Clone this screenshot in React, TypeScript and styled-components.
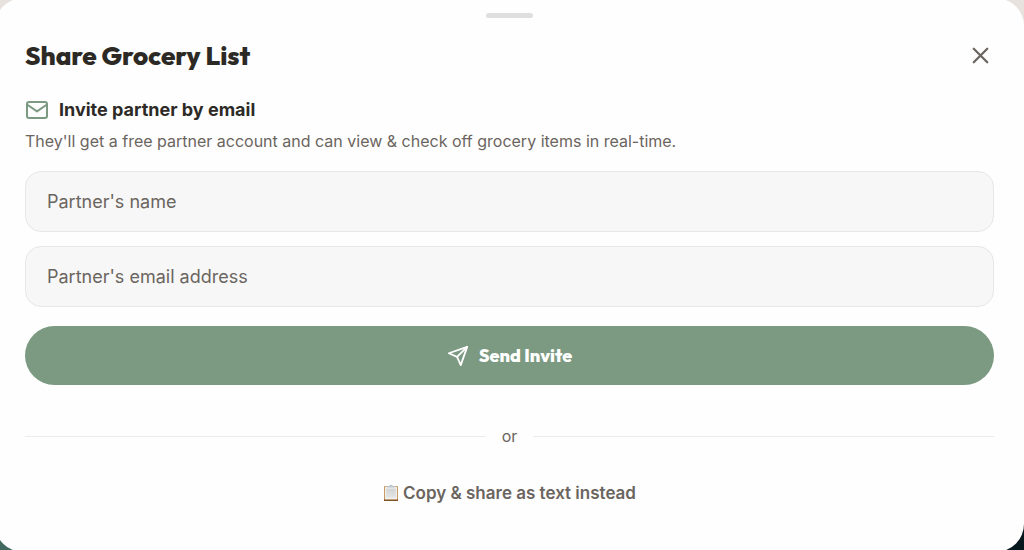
import React, { useState } from "react";
import styled, { createGlobalStyle } from "styled-components";

const GlobalStyle = createGlobalStyle`
  * { box-sizing: border-box; }
  body {
    margin: 0;
    font-family: Inter, "Liberation Sans", sans-serif;
    color: #2d2a26;
  }
`;

const displayFont = `Outfit, Lato, "Liberation Sans", sans-serif`;

const Backdrop = styled.div`
  min-height: 100vh;
  overflow: hidden;
  background: linear-gradient(to bottom, #e8e2de 50%, transparent 50%),
    linear-gradient(to right, #41695f 50%, #07171e 50%);
`;

const Sheet = styled.main`
  margin: -2px 0 -2px -5px;
  min-height: calc(100vh + 4px);
  padding: 15px 30px 32px;
  border-radius: 28px;
  background: #fefefe;
`;

const Handle = styled.div`
  width: 47px;
  height: 5px;
  margin: 0 auto;
  border-radius: 3px;
  background: #dfdfdf;
`;

const Header = styled.header`
  display: flex;
  align-items: center;
  justify-content: space-between;
  margin-top: 20px;
`;

const Title = styled.h1`
  margin: 0;
  font: 800 26px/36px ${displayFont};
`;

const CloseButton = styled.button`
  display: flex;
  padding: 0 0 2px;
  border: 0;
  background: none;
  color: #6b6560;
  cursor: pointer;
`;

const SectionTitle = styled.h2`
  display: flex;
  align-items: center;
  gap: 10px;
  margin: 22px 0 0;
  font-size: 18px;
  font-weight: 700;
  line-height: 28px;

  svg { color: #7c9a82; }
`;

const Description = styled.p`
  margin: 5px 0 18px;
  font-size: 16px;
  line-height: 24px;
  color: #6b6560;
`;

const Form = styled.form`
  display: flex;
  flex-direction: column;
  gap: 14px;
`;

const Field = styled.input`
  width: 100%;
  height: 61px;
  padding: 0 21px;
  border: 1px solid #e7e7e7;
  border-radius: 16px;
  background: #f7f7f7;
  color: #2d2a26;
  font: 400 18px/28px Inter, "Liberation Sans", sans-serif;

  &::placeholder { color: #6b6560; opacity: 1; }
`;

const SubmitButton = styled.button`
  display: flex;
  align-items: center;
  justify-content: center;
  gap: 10px;
  height: 59px;
  margin-top: 5px;
  border: 0;
  border-radius: 30px;
  background: #7c9a82;
  color: #fff;
  font: 800 18px/24px ${displayFont};
  cursor: pointer;
`;

const Divider = styled.div`
  display: flex;
  align-items: center;
  gap: 16px;
  margin: 39px 0 32px;
  font-size: 16px;
  line-height: 24px;
  color: #6b6560;

  &::before, &::after {
    content: "";
    flex: 1;
    height: 1px;
    background: #ececec;
  }
`;

const CopyButton = styled.button`
  display: flex;
  align-items: center;
  justify-content: center;
  gap: 4px;
  width: 100%;
  padding: 0;
  border: 0;
  background: none;
  color: #6b6560;
  font: 600 17px/26px Inter, "Liberation Sans", sans-serif;
  cursor: pointer;
`;

const LineIcon = styled.svg.attrs({
  viewBox: "0 0 24 24",
  fill: "none",
  stroke: "currentColor",
  strokeWidth: 2,
  strokeLinecap: "round",
  strokeLinejoin: "round",
  "aria-hidden": true,
})`
  flex: none;
`;

function Clipboard() {
  return (
    <svg width="16" height="18" viewBox="0 0 16 18" aria-hidden="true">
      <defs>
        <linearGradient id="paper" x1="0" y1="0" x2="0" y2="1">
          <stop offset="0" stopColor="#d2d3d5" />
          <stop offset="1" stopColor="#e4e4e4" />
        </linearGradient>
      </defs>
      <rect x="1" y="2" width="14" height="15" rx="0.6" fill="#c69a62" />
      <path d="M1 15.4h14V17H1z" fill="#80501f" />
      <rect x="2" y="2.8" width="12" height="12.6" fill="#f0f0ef" />
      <rect x="3.2" y="4.6" width="9.6" height="9" fill="url(#paper)" />
      <path d="M4 3.4V2.2h2.2Q6.4.8 8 .8t1.8 1.4H12v1.2z" fill="#b9c8d2" />
    </svg>
  );
}

export default function App() {
  const [name, setName] = useState("");
  const [email, setEmail] = useState("");

  return (
    <Backdrop>
      <GlobalStyle />
      <Sheet>
        <Handle />
        <Header>
          <Title>Share Grocery List</Title>
          <CloseButton type="button" aria-label="Close">
            <LineIcon width={27} height={27}>
              <path d="M18 6 6 18M6 6l12 12" />
            </LineIcon>
          </CloseButton>
        </Header>
        <SectionTitle>
          <LineIcon width={24} height={24}>
            <rect x="2" y="4" width="20" height="16" rx="2" />
            <path d="m2.4 6.8 9.6 6.6 9.6-6.6" />
          </LineIcon>
          Invite partner by email
        </SectionTitle>
        <Description>
          They'll get a free partner account and can view &amp; check off grocery items in real-time.
        </Description>
        <Form onSubmit={(e) => e.preventDefault()}>
          <Field
            type="text"
            aria-label="Partner's name"
            placeholder="Partner's name"
            value={name}
            onChange={(e) => setName(e.target.value)}
          />
          <Field
            type="email"
            aria-label="Partner's email address"
            placeholder="Partner's email address"
            value={email}
            onChange={(e) => setEmail(e.target.value)}
          />
          <SubmitButton type="submit">
            <LineIcon width={22} height={22}>
              <path d="M22 2 11 13" />
              <path d="m22 2-7 20-4-9-9-4z" />
            </LineIcon>
            Send Invite
          </SubmitButton>
        </Form>
        <Divider>or</Divider>
        <CopyButton type="button">
          <Clipboard />
          Copy &amp; share as text instead
        </CopyButton>
      </Sheet>
    </Backdrop>
  );
}
